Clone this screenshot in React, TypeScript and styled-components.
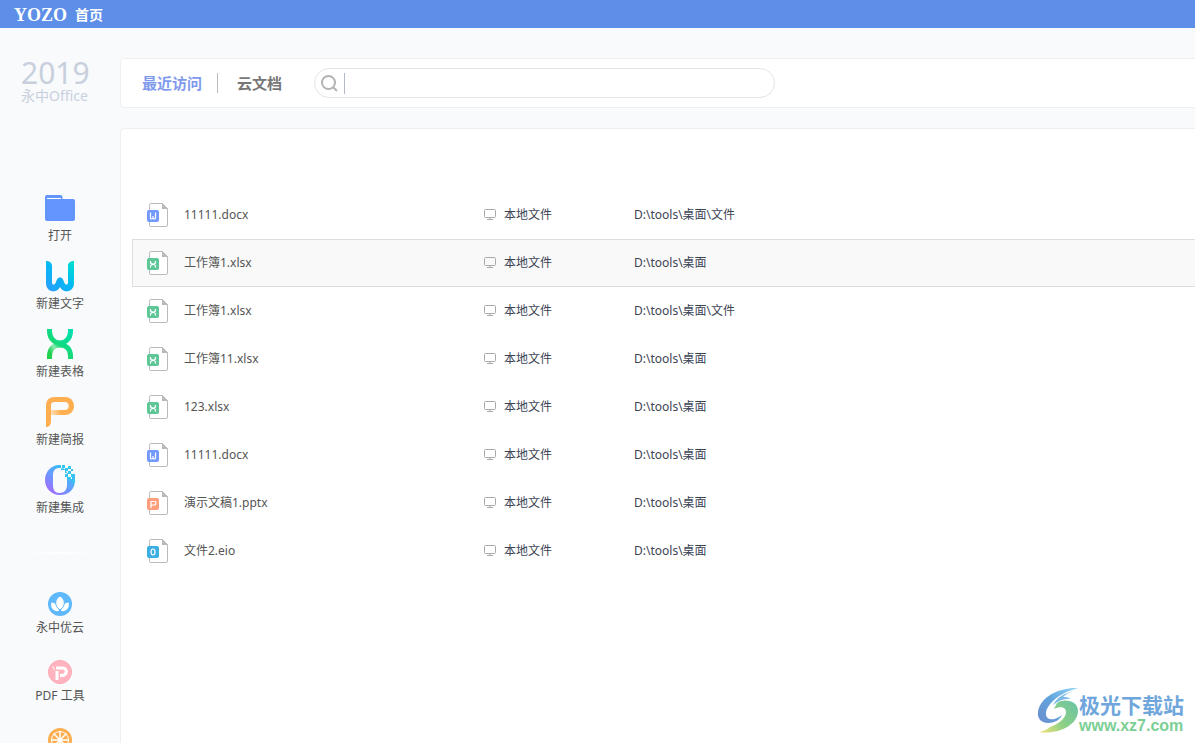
import React from "react";
import styled, { createGlobalStyle } from "styled-components";

const GlobalStyle = createGlobalStyle`
  * { box-sizing: border-box; }
  body {
    margin: 0;
    background: #f8fafc;
    font-family: "Noto Sans", "Noto Sans CJK SC", sans-serif;
    font-size: 12px;
    color: #555;
  }
  button, input { font: inherit; color: inherit; }
`;

const Page = styled.div`
  display: flex;
  flex-direction: column;
  height: 100vh;
  overflow: hidden;
`;

const TitleBar = styled.header`
  display: flex;
  align-items: center;
  flex: none;
  gap: 8px;
  height: 28px;
  padding: 2px 14px 0;
  background: #5d8ee8;
  color: #fff;
`;

const Logo = styled.span`
  font: bold 18px/24px "Liberation Serif", serif;
`;

const HomeTab = styled.span`
  font-weight: bold;
  font-size: 14px;
  line-height: 24px;
`;

const Body = styled.div`
  display: flex;
  flex: 1;
  min-height: 0;
`;

const Sidebar = styled.nav`
  display: flex;
  flex-direction: column;
  align-items: center;
  flex: none;
  width: 120px;
  padding-top: 30px;
`;

const Product = styled.div`
  flex: none;
  height: 134px;
  width: 78px;
  color: #c9d0dd;
  font-size: 14px;
  line-height: 16px;
  white-space: nowrap;
`;

const Year = styled.div`
  font-size: 30px;
  line-height: 30px;
`;

const ItemGroup = styled.div<{ $gap: number }>`
  display: flex;
  flex-direction: column;
  flex: none;
  gap: ${(p) => p.$gap}px;
`;

const SideItem = styled.button`
  display: flex;
  flex-direction: column;
  align-items: center;
  width: 120px;
  padding: 0;
  border: 0;
  background: none;
  line-height: 24px;
  cursor: pointer;

  svg { display: block; }
`;

const Divider = styled.hr`
  flex: none;
  width: 72px;
  height: 2px;
  margin: 32px 0 38px;
  border: 0;
  background: linear-gradient(90deg, transparent, #fff, transparent);
`;

const Main = styled.main`
  display: flex;
  flex-direction: column;
  flex: 1;
  min-width: 0;
  gap: 20px;
  padding-top: 30px;
`;

const Toolbar = styled.div`
  display: flex;
  align-items: center;
  flex: none;
  height: 50px;
  padding-left: 21px;
  border: 1px solid #eeeff1;
  border-right: 0;
  border-radius: 5px 0 0 5px;
  background: #fff;
`;

const Tab = styled.button<{ $active?: boolean }>`
  padding: 0;
  border: 0;
  background: none;
  color: ${(p) => (p.$active ? "#7f9aec" : "#777")};
  font-weight: bold;
  font-size: 15px;
  line-height: 24px;
  cursor: pointer;
`;

const TabSeparator = styled.span`
  width: 1px;
  height: 20px;
  margin: 0 19px 0 15px;
  background: #bbb;
`;

const SearchBox = styled.label`
  display: flex;
  align-items: center;
  width: 461px;
  height: 30px;
  margin-left: 32px;
  padding: 0 16px 0 6px;
  border: 1px solid #e4e4e4;
  border-radius: 15px;
`;

const SearchInput = styled.input`
  flex: 1;
  height: 21px;
  min-width: 0;
  margin-left: 6px;
  padding: 0 6px;
  border: 0;
  border-left: 1px solid #b4bac4;
  outline: 0;
  background: none;
`;

const Panel = styled.section`
  flex: 1;
  padding: 62px 0 0 11px;
  border: 1px solid #eeeff1;
  border-width: 1px 0 0 1px;
  border-radius: 5px 0 0 0;
  background: #fff;
`;

const FileTable = styled.table`
  width: 100%;
  border-collapse: separate;
  border-spacing: 0;
  table-layout: fixed;
`;

const FileRow = styled.tr<{ $hover?: boolean }>`
  height: 48px;
  background: ${(p) => (p.$hover ? "#f9f9f9" : "none")};

  td {
    border: 0 solid ${(p) => (p.$hover ? "#dedede" : "transparent")};
    border-width: 1px 0;
  }
  td:first-child { border-left-width: 1px; }
`;

const Cell = styled.td<{ $w?: number; $dark?: boolean }>`
  width: ${(p) => (p.$w ? p.$w + "px" : "auto")};
  padding: 0;
  color: ${(p) => (p.$dark ? "#3c4454" : "#555")};
  white-space: nowrap;
`;

const CellContent = styled.div<{ $gap?: number; $pad?: number }>`
  display: flex;
  align-items: center;
  height: 24px;
  gap: ${(p) => p.$gap ?? 0}px;
  padding-left: ${(p) => p.$pad ?? 0}px;
  line-height: 20px;
`;

const Watermark = styled.div`
  position: absolute;
  right: 11px;
  bottom: 8px;
  display: flex;
  align-items: flex-end;

  svg { margin-bottom: 2px; }
`;

const MarkText = styled.div`
  color: #6fa6dc;
  font-weight: bold;
  font-size: 21px;
  line-height: 24px;
`;

const MarkUrl = styled.div`
  color: #7bcf94;
  font: bold 16px/18px "Liberation Sans", sans-serif;
`;

const FolderIcon = () => (
  <svg width="32" height="32" viewBox="0 0 32 32">
    <path d="M1 5a2 2 0 0 1 2-2h13.500a2 2 0 0 1 2 2v2H29a2 2 0 0 1 2 2v18a2 2 0 0 1-2 2H3a2 2 0 0 1-2-2z" fill="#6495ff" />
    <path d="M3 6.500h14" stroke="#fff" />
  </svg>
);

const WriterIcon = () => (
  <svg width="32" height="32" viewBox="0 0 32 32" fill="none">
    <defs>
      <linearGradient id="writer" x1="2" y1="30" x2="30" y2="2" gradientUnits="userSpaceOnUse">
        <stop stopColor="#2c9dff" />
        <stop offset=".5" stopColor="#05b8f4" />
        <stop offset="1" stopColor="#00e0cc" />
      </linearGradient>
    </defs>
    <path d="M2 1c3.500 0 6 1.500 6 5v16.500c0 2.500 2.500 2.800 3.500.5l1.500-3.500c1.200-2.800 4.800-2.800 6 0l1.500 3.500c1 2.300 3.500 2 3.500-.5V6c0-3.500 2.500-5 6-5v22c0 9-9.500 10.500-13 5.500l-1-1.500-1 1.500C11.500 33.500 2 32 2 23z" fill="url(#writer)" />
    <path d="M13 19.500c1.200-2.800 4.800-2.800 6 0l-2 5.500-2 3c-1 1-2 2-3.500 2.500z" fill="#12a5f5" opacity=".5" />
  </svg>
);

const SheetIcon = () => (
  <svg width="32" height="32" viewBox="0 0 32 32" fill="none">
    <defs>
      <linearGradient id="sheet" x1="4" y1="30" x2="28" y2="2" gradientUnits="userSpaceOnUse">
        <stop stopColor="#1fcf48" />
        <stop offset=".22" stopColor="#26d45c" />
        <stop offset=".6" stopColor="#0bdc8c" />
        <stop offset="1" stopColor="#00dfb4" />
      </linearGradient>
      <linearGradient id="sheetFade" x1="6" y1="23" x2="15" y2="17" gradientUnits="userSpaceOnUse">
        <stop stopColor="#fff" stopOpacity="0" />
        <stop offset=".5" stopColor="#fff" stopOpacity=".5" />
        <stop offset="1" stopColor="#fff" stopOpacity="0" />
      </linearGradient>
    </defs>
    <path d="M5.500 31v-3C5.500 21 10 17 16 17s10.500 4 10.500 11v3" stroke="url(#sheet)" strokeWidth="5" />
    <path d="M5.500 31v-3C5.500 21 10 17 16 17" stroke="url(#sheetFade)" strokeWidth="5" />
    <path d="M5.500 1v2c0 7 4.500 12 10.500 12s10.500-5 10.500-12V1" stroke="url(#sheet)" strokeWidth="5" />
  </svg>
);

const SlideIcon = () => (
  <svg width="32" height="32" viewBox="0 0 32 32" fill="none">
    <defs>
      <linearGradient id="slideFade" x1="7" y1="0" x2="17" y2="0" gradientUnits="userSpaceOnUse">
        <stop stopColor="#ffdfb4" />
        <stop offset="1" stopColor="#ffb050" />
      </linearGradient>
    </defs>
    <path d="M2 31V10c0-6 3-9 9-9h10c12 0 12 18 0 18h-4v-5h4c5 0 5-8 0-8H11c-3 0-4 1-4 4v15c0 4-2 6-5 6z" fill="#ffaf50" />
    <path d="M7 14h10.500v5H7z" fill="url(#slideFade)" />
  </svg>
);

const SuiteIcon = () => (
  <svg width="32" height="32" viewBox="0 0 32 32">
    <defs>
      <linearGradient id="suite" x1="5" y1="28" x2="25" y2="5" gradientUnits="userSpaceOnUse">
        <stop stopColor="#a36cff" />
        <stop offset=".5" stopColor="#669cff" />
        <stop offset="1" stopColor="#2cc8f0" />
      </linearGradient>
    </defs>
    <path fillRule="evenodd" d="M15 1C7 1 1 8 1 16s6 15 15 15 15-6 15-15v-3h-3v2h-4V9h-3V6h-4V1zM15 4c-4 0-6 3-6 7v10c0 5 2 8 6.500 8s7.500-3 7.500-8V9c-1-4-3-5-8-5z" fill="url(#suite)" />
    <path d="M18 1h3v3h-3zM21 4h3v3h-3zM24 2h3v3h-3zM24 7h3v3h-3zM27 5h2v2h-2zM27 10h4v3h-4zM21 10h3v3h-3zM28 15h3v3h-3zM24 13h3v3h-3z" fill="#35c6f0" />
  </svg>
);

const CloudIcon = () => (
  <svg width="24" height="24" viewBox="0 0 24 24">
    <circle cx="12" cy="12" r="12" fill="#5eb8fb" />
    <g fill="#fff">
      <path d="M11 19C5 20 2 15 3.500 10.500 8 11 10 14 11 19zM13 19c6 1 9-4 7.500-8.500C16 11 14 14 13 19z" />
      <path d="M12 18c-6-4-5.500-11 0-14 5.500 3 6 10 0 14z" stroke="#5eb8fb" />
    </g>
  </svg>
);

const PdfIcon = () => (
  <svg width="24" height="24" viewBox="0 0 24 24" fill="none">
    <circle cx="12" cy="12" r="11.500" fill="#ffb4bf" stroke="#ffa6b1" />
    <path d="M9 20v-9" stroke="#fff" strokeWidth="3" />
    <path d="M8 8h7c4.500 0 4.500 7.500-1 7.500h-2" stroke="#fff" strokeWidth="3" />
    <path d="M4 7h2M5 9h2" stroke="#fff" />
  </svg>
);

const OrangeIcon = () => (
  <svg width="24" height="24" viewBox="0 0 24 24">
    <circle cx="12" cy="12" r="12" fill="#fbae50" />
    <circle cx="12" cy="12" r="9" fill="#fff" />
    <circle cx="12" cy="12" r="8" fill="#fbae50" />
    <path d="M12 3v18M3 12h18M5.500 5.500l13 13M18.500 5.500l-13 13" stroke="#fff" strokeWidth="1.500" />
  </svg>
);

const SearchIcon = () => (
  <svg width="17" height="17" viewBox="0 0 17 17" fill="none" stroke="#b3b3b3" strokeWidth="2">
    <circle cx="7.500" cy="7.500" r="6.500" />
    <path d="M12 12l4 4" />
  </svg>
);

const MonitorIcon = () => (
  <svg width="12" height="12" viewBox="0 0 12 12" fill="none" stroke="#aaa">
    <rect x=".5" y=".5" width="11" height="8" rx="1" />
    <path d="M6 8.500v2M3 10.500h6" />
  </svg>
);

type Kind = "w" | "x" | "p" | "o";

const badgeColor: Record<Kind, string> = { w: "#7399ff", x: "#5ec795", p: "#ff9e7d", o: "#3daee2" };

const badgeMark: Record<Kind, React.ReactNode> = {
  w: <path d="M3.500 9.500V15q0 1 1 1t1.500-1v-2 2q.5 1 1.500 1t1-1V9.500" />,
  x: <path d="M3.500 10v1q0 2 2.500 2t2.500-2v-1M3.500 16.500v-1q0-2 2.500-2t2.500 2v1" />,
  p: <path d="M4 17v-6.500h3.500q1.500 0 1.500 1.700T7.500 14H4" />,
  o: <ellipse cx="6" cy="13" rx="2" ry="3" />,
};

const FileIcon = ({ kind }: { kind: Kind }) => (
  <svg width="22" height="24" viewBox="0 0 22 24" fill="none">
    <path d="M4 .5h11.500l5 5V22a1.500 1.500 0 0 1-1.500 1.500H4A1.500 1.500 0 0 1 2.500 22V2A1.500 1.500 0 0 1 4 .5z" fill="#fff" stroke="#bbb" />
    <path d="M15 0v6h6z" fill="#bbb" />
    <rect y="7" width="12" height="12" rx="2" fill={badgeColor[kind]} />
    <g stroke="#fff" strokeWidth="1.200">{badgeMark[kind]}</g>
  </svg>
);

const MarkLogo = () => (
  <svg width="42" height="46" viewBox="0 0 42 46">
    <defs>
      <linearGradient id="markBlue" x1="2" y1="34" x2="36" y2="0" gradientUnits="userSpaceOnUse">
        <stop stopColor="#6a8fd0" />
        <stop offset=".5" stopColor="#62a5de" />
        <stop offset="1" stopColor="#8fd0f2" />
      </linearGradient>
      <linearGradient id="markGreen" x1="3" y1="45" x2="38" y2="14" gradientUnits="userSpaceOnUse">
        <stop stopColor="#f3e27c" />
        <stop offset=".45" stopColor="#8fd184" />
        <stop offset="1" stopColor="#6cc3a4" />
      </linearGradient>
    </defs>
    <path d="M41 1C24 0 3 9 1 25c-1 7 4 11 10 11 6 0 12-3 14-8-4 3-8 5-12 4-5-1-5-7-2-12C16 12 26 5 41 1z" fill="url(#markBlue)" />
    <path d="M37 4c-9 2-17 6-21 14 6-5 13-7 18-6-3-2-5-2-8-2 3-3 7-5 11-6z" fill="#7abbe6" />
    <path d="M20 16c8-5 21-2 21 8 0 14-20 24-39 21 4-1 8-2 11-5 9-3 16-9 16-15 0-5-6-6-12-3z" fill="url(#markGreen)" />
  </svg>
);

const createItems = [
  { label: "打开", icon: <FolderIcon /> },
  { label: "新建文字", icon: <WriterIcon /> },
  { label: "新建表格", icon: <SheetIcon /> },
  { label: "新建简报", icon: <SlideIcon /> },
  { label: "新建集成", icon: <SuiteIcon /> },
];

const toolItems = [
  { label: "永中优云", icon: <CloudIcon /> },
  { label: "PDF 工具", icon: <PdfIcon /> },
];

const files: { name: string; kind: Kind; path: string; hover?: boolean }[] = [
  { name: "11111.docx", kind: "w", path: "D:\\tools\\桌面\\文件" },
  { name: "工作簿1.xlsx", kind: "x", path: "D:\\tools\\桌面", hover: true },
  { name: "工作簿1.xlsx", kind: "x", path: "D:\\tools\\桌面\\文件" },
  { name: "工作簿11.xlsx", kind: "x", path: "D:\\tools\\桌面" },
  { name: "123.xlsx", kind: "x", path: "D:\\tools\\桌面" },
  { name: "11111.docx", kind: "w", path: "D:\\tools\\桌面" },
  { name: "演示文稿1.pptx", kind: "p", path: "D:\\tools\\桌面" },
  { name: "文件2.eio", kind: "o", path: "D:\\tools\\桌面" },
];

export default function App() {
  return (
    <Page>
      <GlobalStyle />
      <TitleBar>
        <Logo>YOZO</Logo>
        <HomeTab>首页</HomeTab>
      </TitleBar>
      <Body>
        <Sidebar>
          <Product>
            <Year>2019</Year>
            永中Office
          </Product>
          <ItemGroup $gap={12}>
            {createItems.map((item) => (
              <SideItem key={item.label}>
                {item.icon}
                {item.label}
              </SideItem>
            ))}
          </ItemGroup>
          <Divider />
          <ItemGroup $gap={20}>
            {toolItems.map((item) => (
              <SideItem key={item.label}>
                {item.icon}
                {item.label}
              </SideItem>
            ))}
            <SideItem aria-label="更多">
              <OrangeIcon />
            </SideItem>
          </ItemGroup>
        </Sidebar>
        <Main>
          <Toolbar>
            <Tab $active>最近访问</Tab>
            <TabSeparator />
            <Tab>云文档</Tab>
            <SearchBox>
              <SearchIcon />
              <SearchInput type="text" aria-label="搜索" />
            </SearchBox>
          </Toolbar>
          <Panel>
            <FileTable>
              <tbody>
                {files.map((file, i) => (
                  <FileRow key={i} $hover={file.hover}>
                    <Cell $w={352}>
                      <CellContent $gap={15} $pad={14}>
                        <FileIcon kind={file.kind} />
                        {file.name}
                      </CellContent>
                    </Cell>
                    <Cell $w={150} $dark>
                      <CellContent $gap={8}>
                        <MonitorIcon />
                        本地文件
                      </CellContent>
                    </Cell>
                    <Cell $dark>
                      <CellContent>{file.path}</CellContent>
                    </Cell>
                  </FileRow>
                ))}
              </tbody>
            </FileTable>
          </Panel>
        </Main>
      </Body>
      <Watermark>
        <MarkLogo />
        <div>
          <MarkText>极光下载站</MarkText>
          <MarkUrl>www.xz7.com</MarkUrl>
        </div>
      </Watermark>
    </Page>
  );
}
